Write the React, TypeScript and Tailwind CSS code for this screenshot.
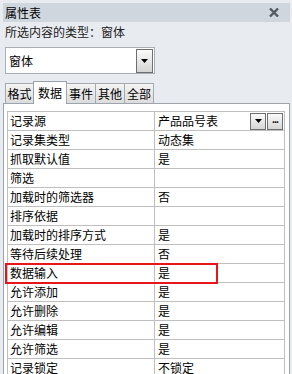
import React from 'react';

const rows: [string, string][] = [
  ['记录源', '产品品号表'],
  ['记录集类型', '动态集'],
  ['抓取默认值', '是'],
  ['筛选', ''],
  ['加载时的筛选器', '否'],
  ['排序依据', ''],
  ['加载时的排序方式', '是'],
  ['等待后续处理', '否'],
  ['数据输入', '是'],
  ['允许添加', '是'],
  ['允许删除', '是'],
  ['允许编辑', '是'],
  ['允许筛选', '是'],
  ['记录锁定', '不锁定'],
];

const tabs = ['格式', '数据', '事件', '其他', '全部'];
const tabWidths = ['w-[29px]', 'w-[34px]', 'w-[30px]', 'w-[30px]', 'w-[30px]'];

const DownArrow = () => (
  <svg width="7" height="4" viewBox="0 0 7 4">
    <path d="M0 0H7L3.5 4Z" fill="#000" />
  </svg>
);

const SmallButton: React.FC<{ children: React.ReactNode }> = ({ children }) => (
  <div className="w-[16px] h-[17px] flex items-center justify-center border border-[#6f6f6f] bg-gradient-to-b from-[#fbfbfb] to-[#d6d6d6]">
    {children}
  </div>
);

export default function App() {
  return (
    <div className="w-[292px] h-[374px] overflow-hidden bg-[#e8ebf0] pt-[3px] pl-[3px] pr-[2px] flex flex-col text-[12px] text-black font-['Noto_Sans_CJK_SC',sans-serif]">
      {/* title bar */}
      <div className="h-[19px] shrink-0 bg-[#d0d6de] flex items-center justify-between pl-[2px] pr-[11px]">
        <span className="leading-[19px]">属性表</span>
        <svg width="10" height="9" viewBox="0 0 10 9">
          <path d="M1 0.5L9 8.5M9 0.5L1 8.5" stroke="#555a60" strokeWidth="2.4" />
        </svg>
      </div>

      {/* selection type */}
      <div className="h-[20px] shrink-0 pl-[2px] leading-[20px] text-[#222]">所选内容的类型：窗体</div>

      {/* object combo */}
      <div className="mt-[5px] ml-[2px] w-[150px] h-[27px] shrink-0 bg-white border border-[#a9afb6] flex items-center justify-between pl-[3px] pr-[1px]">
        <span>窗体</span>
        <div className="w-[17px] h-[24px] flex items-center justify-center border border-[#6f6f6f] bg-gradient-to-b from-[#fbfbfb] to-[#d4d4d4]">
          <DownArrow />
        </div>
      </div>

      {/* tabs */}
      <div className="mt-[7px] h-[22px] shrink-0 flex items-end pl-[2px] relative z-10">
        {tabs.map((t, i) =>
          i === 1 ? (
            <div
              key={t}
              className={`${tabWidths[i]} -ml-px h-[23px] -mb-px bg-white border border-b-0 border-[#9aa0a8] flex items-center justify-center`}
            >
              {t}
            </div>
          ) : (
            <div
              key={t}
              className={`${tabWidths[i]} ${i === 0 ? '' : '-ml-px'} h-[20px] bg-gradient-to-b from-[#f4f4f4] to-[#dcdcdc] border border-b-0 border-[#a4aab1] flex items-center justify-center`}
            >
              {t}
            </div>
          )
        )}
      </div>

      {/* tab page */}
      <div className="flex-1 bg-white border border-[#9ea4ab] pt-[7px] pl-[3px] pr-[4px]">
        <div className="relative border-l border-t border-[#bfbfbf]">
          {rows.map(([name, value], i) => (
            <div key={name} className="h-[19px] flex border-b border-[#bfbfbf]">
              <div className="w-[147px] shrink-0 border-r border-[#bfbfbf] pl-[2px] leading-[18px] whitespace-nowrap">
                {name}
              </div>
              <div className="flex-1 border-r border-[#bfbfbf] pl-[3px] leading-[18px] flex items-center justify-between">
                <span>{value}</span>
                {i === 0 && (
                  <div className="flex gap-[1px] pr-[1px]">
                    <SmallButton>
                      <DownArrow />
                    </SmallButton>
                    <SmallButton>
                      <span className="text-[9px] leading-none font-bold tracking-[-1px] -mt-[3px]">...</span>
                    </SmallButton>
                  </div>
                )}
              </div>
            </div>
          ))}
          {/* highlight */}
          <div className="absolute left-[-3px] top-[151px] w-[213px] h-[21px] border-2 border-[#e8151b]" />
        </div>
      </div>
    </div>
  );
}
